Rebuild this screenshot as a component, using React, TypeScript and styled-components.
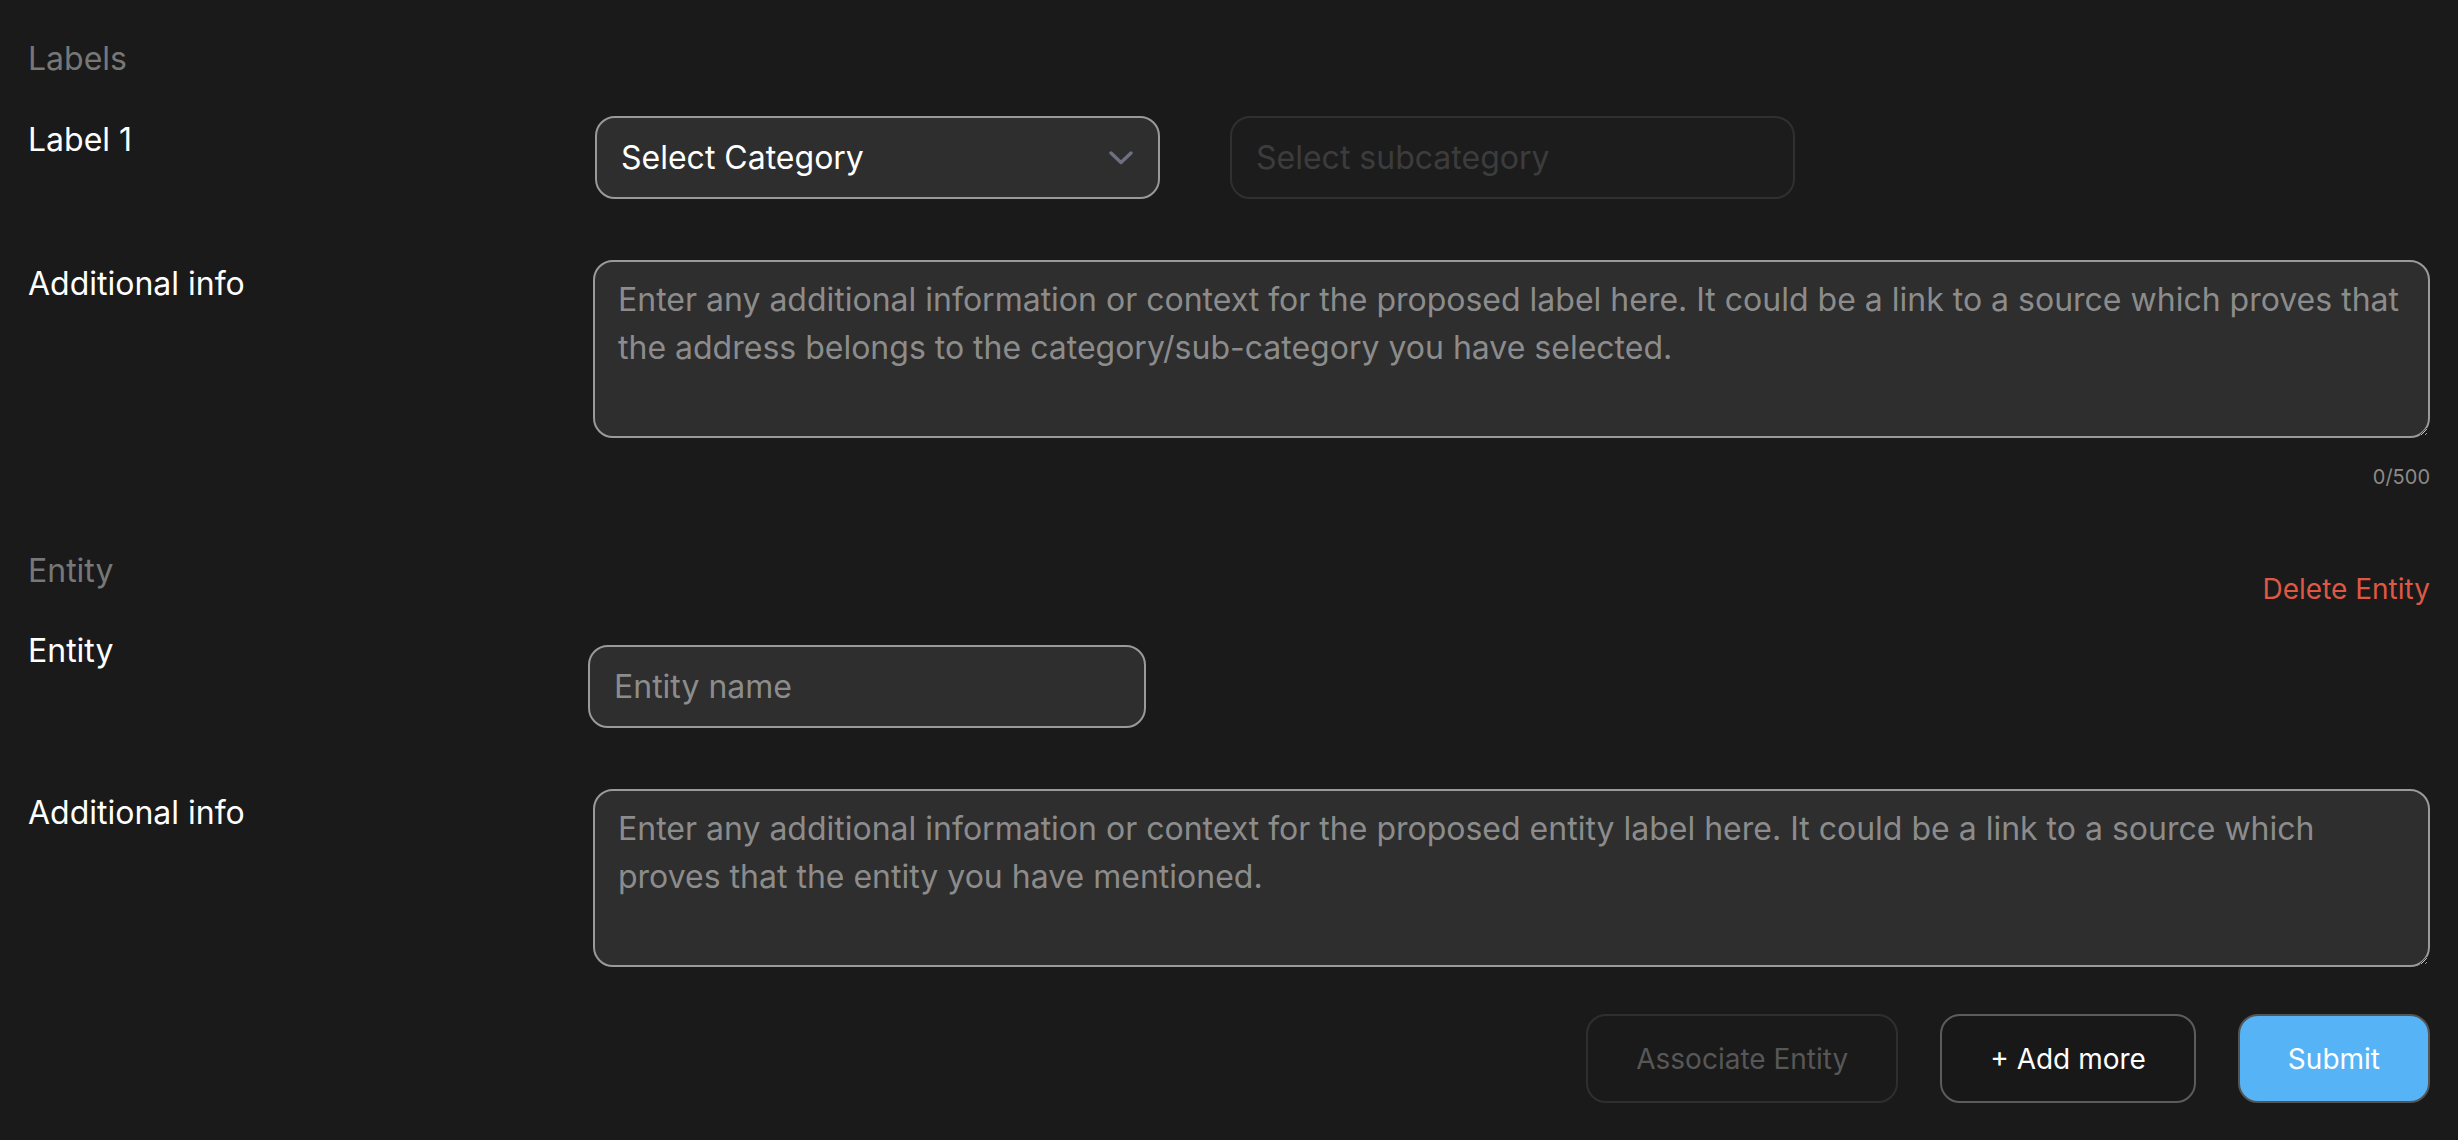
import React from "react";
import styled, { createGlobalStyle, css } from "styled-components";

const LABEL_PLACEHOLDER =
  "Enter any additional information or context for the proposed label here. It could be a link to a source which proves that the address belongs to the category/sub-category you have selected.";
const ENTITY_PLACEHOLDER =
  "Enter any additional information or context for the proposed entity label here. It could be a link to a source which proves that the entity you have mentioned.";

const GlobalStyle = createGlobalStyle`
  html, body {
    margin: 0;
    padding: 0;
    background: #1a1a1a;
  }
  body {
    font-family: Inter, "Noto Sans", "Liberation Sans", sans-serif;
    color: #ffffff;
  }
  * {
    box-sizing: border-box;
  }
`;

const Page = styled.div`
  min-height: 1140px;
  padding: 35px 28px 37px;
  background: #1a1a1a;
`;

const SectionTitle = styled.div`
  font-size: 32px;
  line-height: 48px;
  color: #777777;
`;

// the delete link hangs a little below the title, without pushing the next row down
const SectionHead = styled.div`
  display: flex;
  justify-content: space-between;
  align-items: flex-start;
  height: 48px;
  margin-top: 55px;
`;

const DeleteButton = styled.button`
  margin-top: 21px;
  padding: 0;
  border: none;
  background: none;
  font-family: inherit;
  font-size: 28px;
  line-height: 42px;
  color: #de5844;
  cursor: pointer;
`;

const FieldRow = styled.div<{ $gap: number }>`
  display: grid;
  grid-template-columns: 565px 1fr;
  margin-top: ${({ $gap }) => $gap}px;
`;

const FieldLabel = styled.div`
  font-size: 32px;
  line-height: 48px;
  color: #ffffff;
`;

const SelectPair = styled.div`
  display: flex;
  gap: 70px;
  margin-left: 2px;
`;

const SelectBox = styled.div<{ $disabled?: boolean }>`
  display: flex;
  align-items: center;
  justify-content: space-between;
  width: 565px;
  height: 83px;
  padding: 0 25px 0 24px;
  border-radius: 20px;
  font-size: 32px;
  line-height: 48px;
  cursor: pointer;
  ${({ $disabled }) =>
    $disabled
      ? css`
          border: 2px solid #303030;
          background: #1c1c1c;
          color: #3c3c3c;
          cursor: not-allowed;
        `
      : css`
          border: 2px solid #999999;
          background: #2e2e2e;
          color: #ffffff;
        `}
`;

const Chevron = () => (
  <svg width="24" height="14" viewBox="0 0 24 14" fill="none">
    <polyline
      points="2,2 12,11.5 22,2"
      stroke="#6c7080"
      strokeWidth="3.4"
      strokeLinecap="round"
      strokeLinejoin="round"
    />
  </svg>
);

const fieldText = css`
  font-family: inherit;
  font-size: 32px;
  line-height: 48px;
  color: #ffffff;
  background: #2e2e2e;
  border: 2px solid #9a9a9a;
  border-radius: 20px;
  outline: none;
  &::placeholder {
    color: #8c8c8c;
    opacity: 1;
  }
`;

const TextArea = styled.textarea`
  ${fieldText};
  display: block;
  width: 100%;
  height: 178px;
  padding: 14px 16px 14px 23px;
  resize: vertical;
`;

const TextInput = styled.input`
  ${fieldText};
  display: block;
  width: 558px;
  height: 83px;
  margin-top: 18px;
  margin-left: -5px;
  padding: 0 24px;
`;

const Counter = styled.div`
  margin-top: 24px;
  text-align: right;
  font-size: 20px;
  line-height: 30px;
  color: #8a8a8a;
`;

const ButtonBar = styled.div`
  display: flex;
  justify-content: flex-end;
  gap: 42px;
  margin-top: 47px;
`;

type Variant = "ghost" | "outline" | "primary";

const ActionButton = styled.button<{ $variant: Variant }>`
  height: 89px;
  padding: 0 48px;
  border-radius: 20px;
  font-family: inherit;
  font-size: 28px;
  line-height: 42px;
  cursor: pointer;
  ${({ $variant }) =>
    $variant === "ghost"
      ? css`
          border: 2px solid #2f2f2f;
          background: #1a1a1a;
          color: #575757;
          cursor: not-allowed;
        `
      : $variant === "outline"
      ? css`
          border: 2px solid #5c5c5c;
          background: #181818;
          color: #ffffff;
        `
      : css`
          border: 2px solid #555555;
          background: #56b4f6;
          color: #ffffff;
        `}
`;

const App: React.FC = () => (
  <Page>
    <GlobalStyle />
    <SectionTitle>Labels</SectionTitle>

    <FieldRow $gap={33}>
      <FieldLabel>Label 1</FieldLabel>
      <SelectPair>
        <SelectBox>
          <span>Select Category</span>
          <Chevron />
        </SelectBox>
        <SelectBox $disabled>
          <span>Select subcategory</span>
        </SelectBox>
      </SelectPair>
    </FieldRow>

    <FieldRow $gap={61}>
      <FieldLabel>Additional info</FieldLabel>
      <div>
        <TextArea placeholder={LABEL_PLACEHOLDER} maxLength={500} />
        <Counter>0/500</Counter>
      </div>
    </FieldRow>

    <SectionHead>
      <SectionTitle>Entity</SectionTitle>
      <DeleteButton type="button">Delete Entity</DeleteButton>
    </SectionHead>

    <FieldRow $gap={32}>
      <FieldLabel>Entity</FieldLabel>
      <div>
        <TextInput placeholder="Entity name" />
      </div>
    </FieldRow>

    <FieldRow $gap={61}>
      <FieldLabel>Additional info</FieldLabel>
      <TextArea placeholder={ENTITY_PLACEHOLDER} />
    </FieldRow>

    <ButtonBar>
      <ActionButton $variant="ghost" type="button" disabled>
        Associate Entity
      </ActionButton>
      <ActionButton $variant="outline" type="button">
        + Add more
      </ActionButton>
      <ActionButton $variant="primary" type="button">
        Submit
      </ActionButton>
    </ButtonBar>
  </Page>
);

export default App;
